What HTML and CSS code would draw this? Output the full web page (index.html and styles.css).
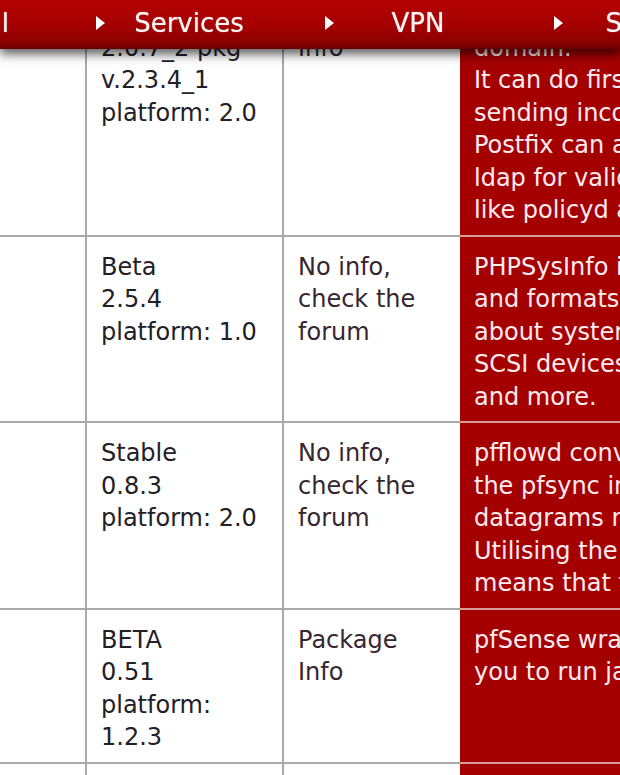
FILE: index.html
```html
<!DOCTYPE html>
<html lang="en">
<head>
<meta charset="utf-8">
<title>Packages</title>
<link rel="stylesheet" href="styles.css">
</head>
<body>
<nav class="topnav">
  <ul class="menu">
    <li class="menu-item"><span class="arrow"></span><span class="label">Firewall</span></li>
    <li class="menu-item"><span class="arrow"></span><span class="label">Services</span></li>
    <li class="menu-item"><span class="arrow"></span><span class="label">VPN</span></li>
    <li class="menu-item"><span class="arrow"></span><span class="label">Status</span></li>
  </ul>
</nav>
<table class="pkg-table">
  <colgroup>
    <col class="c-name">
    <col class="c-version">
    <col class="c-info">
    <col class="c-desc">
  </colgroup>
  <tbody>
    <tr>
      <td class="cell"></td>
      <td class="cell ver">Stable<br>2.0.7_2 pkg<br>v.2.3.4_1<br>platform: 2.0</td>
      <td class="cell info">Package<br>Info</td>
      <td class="cell desc">Forwarder to internal mail servers per<br>domain.<br>It can do first level spam checks before<br>sending incoming mail to internal servers.<br>Postfix can also check recipients using<br>ldap for valid users and use other filters<br>like policyd and antispam plugins.</td>
    </tr>
    <tr>
      <td class="cell"></td>
      <td class="cell ver">Beta<br>2.5.4<br>platform: 1.0</td>
      <td class="cell info">No info,<br>check the<br>forum</td>
      <td class="cell desc">PHPSysInfo is a customizable PHP Script<br>and formats information nicely. It will<br>about system facts like Uptime, CPU,<br>SCSI devices, IDE devices, Network adapters,<br>and more.</td>
    </tr>
    <tr>
      <td class="cell"></td>
      <td class="cell ver">Stable<br>0.8.3<br>platform: 2.0</td>
      <td class="cell info">No info,<br>check the<br>forum</td>
      <td class="cell desc">pfflowd converts OpenBSD PF status messages<br>the pfsync interface) to Cisco NetFlow<br>datagrams may be sent (via UDP) to a host<br>Utilising the pfsync interface to generate<br>means that flow statistics are accurate.</td>
    </tr>
    <tr>
      <td class="cell"></td>
      <td class="cell ver">BETA<br>0.51<br>platform:<br>1.2.3</td>
      <td class="cell info">Package<br>Info</td>
      <td class="cell desc">pfSense wrapper for ezjail. ezjail allows<br>you to run jails on your firewall.</td>
    </tr>
    <tr>
      <td class="cell"></td>
      <td class="cell ver">Stable<br>1.0</td>
      <td class="cell info">Package<br>Info</td>
      <td class="cell desc">More packages</td>
    </tr>
  </tbody>
</table>
</body>
</html>
```

FILE: styles.css
```css
html, body {
  margin: 0;
  padding: 0;
  background: #ffffff;
  overflow: hidden;
}

body {
  font-family: "DejaVu Sans", Verdana, sans-serif;
  font-size: 24px;
  line-height: 32.5px;
}

.topnav {
  position: fixed;
  top: 0;
  left: 0;
  right: 0;
  height: 49px;
  z-index: 10;
  background: linear-gradient(#b40404, #a30000 55%, #8a0000 88%, #650000);
  box-shadow: 0 5px 10px rgba(0, 0, 0, 0.65);
}

.menu {
  list-style: none;
  margin: 0 0 0 -144px;
  padding: 0;
  display: flex;
  height: 46px;
}

.menu-item {
  flex: none;
  width: 229px;
  display: flex;
  align-items: center;
  color: #fff4f4;
  font-size: 26px;
  text-shadow: 0 0 1px rgba(255, 240, 240, 0.8);
}

.arrow {
  flex: none;
  margin-left: 11px;
  width: 0;
  height: 0;
  border-left: 9px solid #ffffff;
  border-top: 7px solid transparent;
  border-bottom: 7px solid transparent;
}

.label {
  flex: none;
  width: 160px;
  margin-left: 4px;
  text-align: center;
  white-space: nowrap;
}

.pkg-table {
  table-layout: fixed;
  border-collapse: separate;
  border-spacing: 0;
  width: 910px;
  margin: -15px 0 0 -50px;
}

.c-name { width: 137px; }
.c-version { width: 197px; }
.c-info { width: 176px; }
.c-desc { width: 400px; }

.cell {
  vertical-align: top;
  padding: 14px 8px 8px 14px;
  border-bottom: 2px solid #a9a9a9;
  border-right: 2px solid #a9a9a9;
  white-space: nowrap;
  overflow: hidden;
  color: #222026;
}

.info {
  color: #362630;
  border-right: none;
}

.desc {
  background: #a50000;
  color: #ffecf0;
  border-right: none;
  border-bottom-color: #d89a9a;
}
```
